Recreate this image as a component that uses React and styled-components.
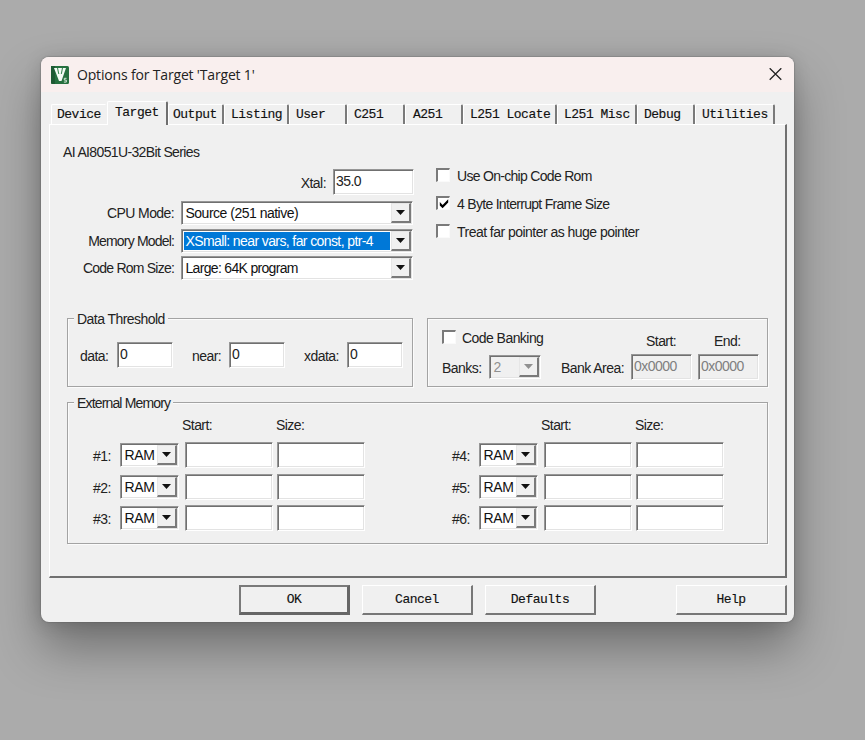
import React from "react";
import styled, { createGlobalStyle } from "styled-components";

const tabs = [
  { name: "Device", width: 56, indent: 6 },
  { name: "Target", width: 61, indent: 8, active: true },
  { name: "Output", width: 56, indent: 5 },
  { name: "Listing", width: 65, indent: 7 },
  { name: "User", width: 58, indent: 7 },
  { name: "C251", width: 58, indent: 7 },
  { name: "A251", width: 58, indent: 8 },
  { name: "L251 Locate", width: 94, indent: 7 },
  { name: "L251 Misc", width: 80, indent: 7 },
  { name: "Debug", width: 58, indent: 7 },
  { name: "Utilities", width: 80, indent: 7 },
];

const Arrow = () => (
  <ArrowButton>
    <svg width="9" height="5" viewBox="0 0 9 5">
      <path d="M0 0h9L4.5 5z" fill="currentColor" />
    </svg>
  </ArrowButton>
);

const Select = ({ width, disabled, selected, tracking, children }) => (
  <SelectBox $width={width} $disabled={disabled}>
    <SelectText $selected={selected} $tracking={tracking}>
      {children}
    </SelectText>
    <Arrow />
  </SelectBox>
);

const Check = ({ checked, gap, tracking, children }) => (
  <CheckRow $gap={gap} $tracking={tracking}>
    <CheckBox>
      {checked && (
        <svg width="10" height="10" viewBox="0 0 10 10">
          <path d="M0.8 3v3.4L3.6 9.2 9.2 3.6V0.3L3.6 5.9z" fill="#000" />
        </svg>
      )}
    </CheckBox>
    {children}
  </CheckRow>
);

const MemoryBank = ({ ids }) => (
  <Bank>
    <span />
    <StartHeading>Start:</StartHeading>
    <SizeHeading>Size:</SizeHeading>
    {ids.map((id) => (
      <React.Fragment key={id}>
        <BankType>
          <Label $width={27}>#{id}:</Label>
          <Select width={59} tracking={-0.4}>
            RAM
          </Select>
        </BankType>
        <Field $width={88} />
        <Field $width={88} />
      </React.Fragment>
    ))}
  </Bank>
);

export default function App() {
  return (
    <Desktop>
      <GlobalStyle />
      <Dialog>
        <TitleBar>
          <svg width="18" height="18" viewBox="0 0 18 18">
            <rect width="18" height="18" rx="1.5" fill="#26703f" />
            <path d="M0 0h4v18H1.5A1.5 1.5 0 0 1 0 16.5z" fill="#1d5a33" />
            <path d="M3 2h12L10.5 15H8z" fill="#f4fbf5" />
            <path d="M6.5 2l1.3 6M11.5 2l-1.2 6" stroke="#3f8a56" strokeWidth="1.1" />
            <path d="M15.5 12.3h-2.2v1.8h2v2h-2.4" stroke="#d5ead9" fill="none" />
          </svg>
          <Title>Options for Target 'Target 1'</Title>
          <svg width="13" height="13" viewBox="0 0 13 13">
            <path d="M0.7 0.2l11.6 11.6M12.3 0.2L0.7 11.8" stroke="#222" strokeWidth="1.25" />
          </svg>
        </TitleBar>

        <TabBar>
          {tabs.map((tab) => (
            <Tab key={tab.name} $width={tab.width} $indent={tab.indent} $active={tab.active}>
              {tab.name}
            </Tab>
          ))}
        </TabBar>

        <Panel>
          <Series>AI AI8051U-32Bit Series</Series>

          <Settings>
            <Options>
              <XtalRow>
                <Label>Xtal:</Label>
                <Field $width={81}>35.0</Field>
              </XtalRow>
              <OptionGrid>
                <OptionLabel $tracking={-0.6}>CPU Mode:</OptionLabel>
                <Select width={232}>Source (251 native)</Select>
                <OptionLabel $tracking={-0.82}>Memory Model:</OptionLabel>
                <Select width={232} selected tracking={-0.6}>
                  XSmall: near vars, far const, ptr-4
                </Select>
                <OptionLabel $tracking={-0.78}>Code Rom Size:</OptionLabel>
                <Select width={232} tracking={-0.68}>
                  Large: 64K program
                </Select>
              </OptionGrid>
            </Options>
            <Checks>
              <Check gap={7} tracking={-0.7}>
                Use On-chip Code Rom
              </Check>
              <Check gap={7} tracking={-0.7} checked>
                4 Byte Interrupt Frame Size
              </Check>
              <Check gap={7} tracking={-0.53}>
                Treat far pointer as huge pointer
              </Check>
            </Checks>
          </Settings>

          <Groups>
            <Group $width={346} $height={69}>
              <Legend $tracking={-0.55}>Data Threshold</Legend>
              <Thresholds>
                <FieldRow>
                  <Label $width={37}>data:</Label>
                  <Field $width={56}>0</Field>
                </FieldRow>
                <FieldRow>
                  <Label $width={37}>near:</Label>
                  <Field $width={56}>0</Field>
                </FieldRow>
                <FieldRow>
                  <Label $width={43}>xdata:</Label>
                  <Field $width={56}>0</Field>
                </FieldRow>
              </Thresholds>
            </Group>

            <Group $width={341} $height={69}>
              <BankingHead>
                <Check gap={6}>Code Banking</Check>
                <HeadLabel>Start:</HeadLabel>
                <HeadLabel>End:</HeadLabel>
              </BankingHead>
              <BankingRow>
                <Label $width={47}>Banks:</Label>
                <Select width={52} disabled>
                  2
                </Select>
                <AreaLabel $width={70}>Bank Area:</AreaLabel>
                <AreaFields>
                  <Field $width={61} $disabled>
                    0x0000
                  </Field>
                  <Field $width={61} $disabled>
                    0x0000
                  </Field>
                </AreaFields>
              </BankingRow>
            </Group>
          </Groups>

          <MemoryGroup $width={701} $height={142}>
            <Legend $tracking={-0.84}>External Memory</Legend>
            <MemoryBank ids={[1, 2, 3]} />
            <MemoryBank ids={[4, 5, 6]} />
          </MemoryGroup>
        </Panel>

        <Footer>
          <Button $default>OK</Button>
          <Button>Cancel</Button>
          <Button>Defaults</Button>
          <HelpButton>Help</HelpButton>
        </Footer>
      </Dialog>
    </Desktop>
  );
}

const GlobalStyle = createGlobalStyle`
  * {
    box-sizing: border-box;
  }

  body {
    margin: 0;
    background: #ababab;
  }
`;

const Desktop = styled.div`
  width: 865px;
  height: 740px;
  padding: 57px 0 0 41px;
  overflow: hidden;
  background: #ababab;
  color: #222;
  font-family: "Liberation Sans", Arial, sans-serif;
  font-size: 14px;
  letter-spacing: -0.55px;
  line-height: 18px;
  white-space: nowrap;
`;

const Dialog = styled.div`
  width: 753px;
  height: 565px;
  border-radius: 8px;
  overflow: hidden;
  background: #f0f0f0;
  box-shadow: 0 0 1px 1px rgba(80, 80, 80, 0.25), 0 2px 18px rgba(0, 0, 0, 0.14),
    0 26px 48px rgba(0, 0, 0, 0.34);
`;

const TitleBar = styled.div`
  height: 35px;
  padding: 0 12px 0 10px;
  display: flex;
  align-items: center;
  background: #f9efee;
`;

const Title = styled.div`
  flex: 1;
  padding: 0 0 0 8px;
  font-family: "Open Sans", "Noto Sans", sans-serif;
  font-size: 14px;
  letter-spacing: -0.17px;
`;

const TabBar = styled.div`
  height: 32px;
  padding-left: 10px;
  display: flex;
  align-items: flex-end;
`;

const Tab = styled.div`
  width: ${(props) => props.$width}px;
  height: ${(props) => (props.$active ? 24 : 20)}px;
  margin-bottom: ${(props) => (props.$active ? -1 : 0)}px;
  padding-left: ${(props) => props.$indent - 1}px;
  position: relative;
  border-top: 1px solid #fff;
  border-left: 1px solid #fff;
  border-right: 2px solid ${(props) => (props.$active ? "#6f6f6f" : "#7a7a7a")};
  border-radius: 2px 2px 0 0;
  background: #f0f0f0;
  z-index: ${(props) => (props.$active ? 1 : 0)};
  color: #111;
  font-family: "Liberation Mono", monospace;
  font-size: 13px;
  letter-spacing: -0.5px;
  line-height: ${(props) => (props.$active ? 21 : 19)}px;
  -webkit-text-stroke: 0.15px #111;

  &:first-child {
    border-right-color: #f0f0f0;
  }
`;

const Panel = styled.div`
  width: 738px;
  height: 454px;
  margin-left: 8px;
  padding: 18px 0 0 13px;
  border: solid;
  border-width: 1px 2px 2px 1px;
  border-color: #fff #707070 #707070 #fff;
`;

const Series = styled.div`
  height: 18px;
  letter-spacing: -0.64px;
`;

const Settings = styled.div`
  display: flex;
`;

const Options = styled.div`
  width: 351px;
  padding-top: 8px;
`;

const Label = styled.span`
  width: ${(props) => (props.$width ? `${props.$width}px` : "auto")};
  padding-top: 2px;
`;

const XtalRow = styled.div`
  height: 32px;
  display: flex;
  justify-content: flex-end;
  align-items: flex-start;
  gap: 7px;

  ${Label} {
    padding-top: 5px;
  }
`;

const OptionGrid = styled.div`
  display: grid;
  grid-template-columns: 111px 232px;
  grid-template-rows: 28px 27px 24px;
  column-gap: 7px;
`;

const OptionLabel = styled.span`
  padding-top: 3px;
  text-align: right;
  letter-spacing: ${(props) => props.$tracking}px;
`;

const Field = styled.div`
  width: ${(props) => props.$width}px;
  height: 26px;
  padding: 2px 0 0 2px;
  border: 1px solid;
  border-color: #969696 #fff #fff #969696;
  box-shadow: inset 1px 1px #707070, inset -1px -1px #e3e3e3;
  background: ${(props) => (props.$disabled ? "#f0f0f0" : "#fff")};
  color: ${(props) => (props.$disabled ? "#7f7f7f" : "#222")};
`;

const SelectBox = styled.div`
  width: ${(props) => props.$width}px;
  height: 24px;
  padding: 2px;
  display: flex;
  border: 1px solid;
  border-color: #969696 #fff #fff #969696;
  box-shadow: inset 1px 1px #707070, inset -1px -1px #e3e3e3;
  background: ${(props) => (props.$disabled ? "#f0f0f0" : "#fff")};
  color: ${(props) => (props.$disabled ? "#909090" : "#111")};
`;

const SelectText = styled.div`
  flex: 1;
  min-width: 0;
  margin-right: 1px;
  padding-left: 1.5px;
  line-height: 19px;
  letter-spacing: ${(props) => props.$tracking || -0.5}px;
  background: ${(props) => (props.$selected ? "#0078d7" : "transparent")};
  color: ${(props) => (props.$selected ? "#fff" : "inherit")};
`;

const ArrowButton = styled.div`
  width: 20px;
  margin: -1px -1px -1px 0;
  display: flex;
  justify-content: center;
  align-items: center;
  border: solid;
  border-width: 1px 2px 2px 1px;
  border-color: #e6e6e6 #7a7a7a #7a7a7a #e6e6e6;
  background: #f0f0f0;
  color: inherit;
`;

const Checks = styled.div`
  padding-left: 22px;
`;

const CheckRow = styled.div`
  height: 28px;
  padding-top: 1px;
  display: flex;
  align-items: center;
  gap: ${(props) => props.$gap}px;
  letter-spacing: ${(props) => props.$tracking || -0.55}px;
`;

const CheckBox = styled.div`
  width: 14px;
  height: 14px;
  margin-top: -1px;
  display: flex;
  justify-content: center;
  align-items: center;
  border: solid;
  border-width: 2px 1px 1px 2px;
  border-color: #7a7a7a #fafafa #fafafa #7a7a7a;
  background: #fff;
`;

const Groups = styled.div`
  margin: 38px 0 0 4px;
  display: flex;
  gap: 14px;
`;

const Group = styled.div`
  width: ${(props) => props.$width}px;
  height: ${(props) => props.$height}px;
  position: relative;
  border: 1px solid #a3a3a3;
  box-shadow: 1px 1px #fbfbfb, inset 1px 1px #fbfbfb;
`;

const Legend = styled.span`
  position: absolute;
  top: -9px;
  left: 6px;
  padding: 0 3px;
  background: #f0f0f0;
  letter-spacing: ${(props) => props.$tracking}px;
`;

const Thresholds = styled.div`
  padding: 23px 0 0 12px;
  display: flex;
  gap: 19px;
`;

const FieldRow = styled.div`
  display: flex;
  align-items: center;
`;

const BankingHead = styled.div`
  height: 35px;
  padding: 4px 0 0 14px;
  display: grid;
  grid-template-columns: 204px 68px 1fr;
`;

const HeadLabel = styled.span`
  padding-top: 9px;
`;

const BankingRow = styled.div`
  padding-left: 14px;
  display: flex;
  align-items: center;
`;

const AreaLabel = styled(Label)`
  margin-left: 20px;
`;

const AreaFields = styled.div`
  display: flex;
  gap: 6px;
`;

const MemoryGroup = styled(Group)`
  margin: 15px 0 0 4px;
  padding: 13px 0 0 25px;
  display: grid;
  grid-template-columns: 359px 1fr;
`;

const Bank = styled.div`
  display: grid;
  grid-template-columns: 88px 88px 88px;
  grid-template-rows: 26px repeat(3, 31.5px);
  column-gap: 4px;
  align-items: start;
`;

const StartHeading = styled.span`
  margin-left: -3px;
`;

const SizeHeading = styled.span`
  margin-left: -1px;
`;

const BankType = styled.div`
  height: 26px;
  display: flex;
  align-items: center;
`;

const Footer = styled.div`
  padding: 7px 0 0 198px;
  display: flex;
  gap: 12px;
`;

const Button = styled.div`
  width: 111px;
  height: 30px;
  border: solid;
  border-width: ${(props) => (props.$default ? "2px 3px 3px 2px" : "1px 2px 2px 1px")};
  border-color: ${(props) => (props.$default ? "#7a7a7a #666 #666 #7a7a7a" : "#fff #777 #777 #fff")};
  color: #111;
  font-family: "Liberation Mono", monospace;
  font-size: 13px;
  letter-spacing: -0.5px;
  line-height: ${(props) => (props.$default ? 25 : 27)}px;
  text-align: center;
  -webkit-text-stroke: 0.15px #111;
`;

const HelpButton = styled(Button)`
  margin-left: 68px;
`;
